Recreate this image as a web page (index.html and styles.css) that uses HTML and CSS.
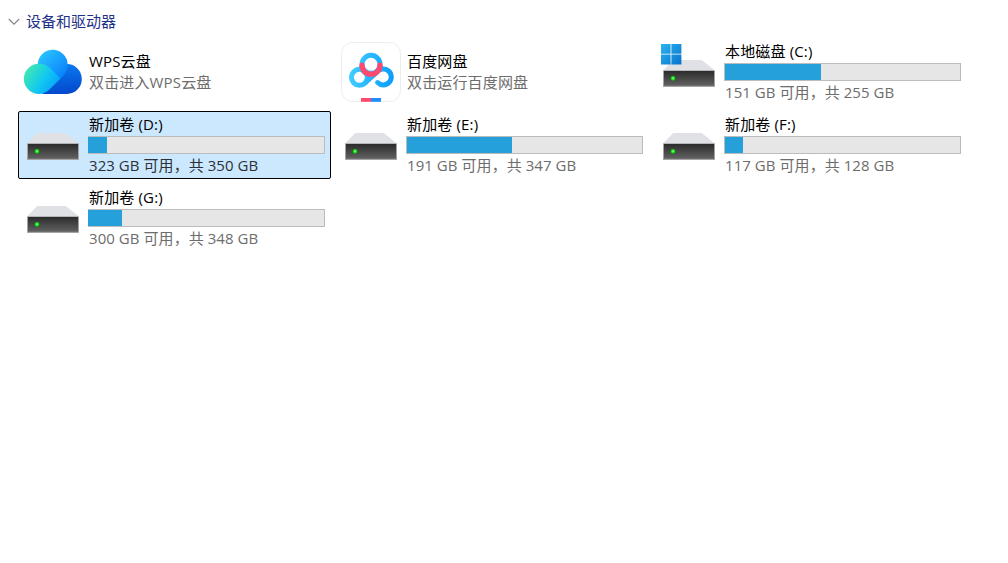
FILE: index.html
```html
<!DOCTYPE html>
<html lang="zh-CN">
<head>
  <meta charset="UTF-8" />
  <meta name="viewport" content="width=device-width, initial-scale=1" />
  <title>此电脑</title>
  <link rel="stylesheet" href="styles.css">
</head>
<body>
  <!-- Shared drive shape -->
  <svg class="defs" width="0" height="0">
    <defs>
      <linearGradient id="driveFront" x1="0" y1="0" x2="0" y2="1">
        <stop offset="0" stop-color="#2b2b2b" />
        <stop offset="1" stop-color="#626262" />
      </linearGradient>
      <radialGradient id="led">
        <stop offset="0" stop-color="#a8ffa4" />
        <stop offset="0.5" stop-color="#22e622" />
        <stop offset="1" stop-color="#0a8a12" />
      </radialGradient>
      <symbol id="drive" viewBox="1 1 69 66">
        <path d="M19.3 22H47.7L61 32.5H9Z" fill="#dfe1e5" />
        <rect x="9" y="32.2" width="52" height="16.7" rx="0.6" fill="#a3a3a3" />
        <rect x="10" y="33" width="50" height="14.8" fill="url(#driveFront)" />
        <circle cx="19" cy="40.3" r="2.6" fill="url(#led)" />
      </symbol>
    </defs>
  </svg>

  <div class="group-header">
    <svg class="chevron" width="12" height="8" viewBox="0 0 12 8"><path d="M0.8 1L6 6.2L11.2 1" /></svg>
    <h2>设备和驱动器</h2>
  </div>

  <div class="drive-grid">
    <div class="tile app">
      <svg class="icon" viewBox="1 1 69 66">
        <defs>
          <linearGradient id="wpsTop" x1="0.1" y1="0.1" x2="0.85" y2="0.85">
            <stop offset="0" stop-color="#2bc4ff" />
            <stop offset="1" stop-color="#0b84fb" />
          </linearGradient>
          <linearGradient id="wpsRight" x1="0.4" y1="0" x2="0.5" y2="1">
            <stop offset="0" stop-color="#0a7bf0" />
            <stop offset="1" stop-color="#0448cc" />
          </linearGradient>
          <linearGradient id="wpsLeft" x1="0.05" y1="0.3" x2="0.9" y2="0.75">
            <stop offset="0" stop-color="#3ce6b4" />
            <stop offset="0.55" stop-color="#12c8f0" />
            <stop offset="1" stop-color="#06a4fb" />
          </linearGradient>
        </defs>
        <path d="M49 26A14.8 15 0 0 1 49 56H24L38 38Z" fill="url(#wpsRight)" />
        <path d="M19.7 27.2A15 15 0 1 1 49.3 30.2Q47.5 36.5 42.3 40.4L31 41Z" fill="url(#wpsTop)" />
        <path d="M21 25.7Q27.5 25.7 32 30L42.5 40.5L32 51Q27 56 21 56A15.1 15.1 0 0 1 21 25.7Z" fill="url(#wpsLeft)" />
      </svg>
      <div class="info">
        <div class="name">WPS云盘</div>
        <div class="detail">双击进入WPS云盘</div>
      </div>
    </div>

    <div class="tile app">
      <svg class="icon" viewBox="1 1 69 66">
        <defs>
          <linearGradient id="panBlue" gradientUnits="userSpaceOnUse" x1="13" y1="36" x2="58" y2="42">
            <stop offset="0" stop-color="#42ceff" />
            <stop offset="1" stop-color="#0a9cfd" />
          </linearGradient>
        </defs>
        <rect x="5.5" y="4.5" width="59" height="59" rx="11" fill="#fff" stroke="#ededed" />
        <g fill="none" stroke="url(#panBlue)" stroke-width="5" stroke-linecap="round">
          <circle cx="35" cy="26.3" r="9" />
          <circle cx="23.4" cy="39.3" r="8" />
          <path d="M29 45L40.8 34.2A8 8 0 1 1 41.6 44.6" />
        </g>
        <path d="M22 29L25 28L33 36L30 39L23 32ZM48 29L45 28L37 36L39 37L47 32Z" fill="url(#panBlue)" />
        <path d="M26 27.2A9 9 0 0 0 44 27.2" fill="none" stroke="#ff4a6e" stroke-width="5.2" stroke-linecap="round" />
        <rect x="25" y="60" width="10" height="3.8" fill="#ff4a6e" />
        <rect x="35" y="60" width="10" height="3.8" fill="#1e8cff" />
      </svg>
      <div class="info">
        <div class="name">百度网盘</div>
        <div class="detail">双击运行百度网盘</div>
      </div>
    </div>

    <div class="tile">
      <svg class="icon" viewBox="1 1 69 66">
        <defs>
          <linearGradient id="winBlue" gradientUnits="userSpaceOnUse" x1="7" y1="6" x2="27" y2="26">
            <stop offset="0" stop-color="#2bb4ee" />
            <stop offset="1" stop-color="#0874cf" />
          </linearGradient>
        </defs>
        <use href="#drive" x="1" y="1" width="69" height="66" />
        <path d="M7 6H16.6V15.7H7ZM17.4 6H27.4V15.7H17.4ZM7 16.5H16.6V26.4H7ZM17.4 16.5H27.4V26.4H17.4Z" fill="url(#winBlue)" />
      </svg>
      <div class="info">
        <div class="name">本地磁盘 (C:)</div>
        <div class="bar"><div class="fill" style="width: 40.9%"></div></div>
        <div class="detail">151 GB 可用，共 255 GB</div>
      </div>
    </div>

    <div class="tile selected">
      <svg class="icon"><use href="#drive" /></svg>
      <div class="info">
        <div class="name">新加卷 (D:)</div>
        <div class="bar flush"><div class="fill" style="width: 8.1%"></div></div>
        <div class="detail">323 GB 可用，共 350 GB</div>
      </div>
    </div>

    <div class="tile">
      <svg class="icon"><use href="#drive" /></svg>
      <div class="info">
        <div class="name">新加卷 (E:)</div>
        <div class="bar"><div class="fill" style="width: 44.7%"></div></div>
        <div class="detail">191 GB 可用，共 347 GB</div>
      </div>
    </div>

    <div class="tile">
      <svg class="icon"><use href="#drive" /></svg>
      <div class="info">
        <div class="name">新加卷 (F:)</div>
        <div class="bar"><div class="fill" style="width: 7.7%"></div></div>
        <div class="detail">117 GB 可用，共 128 GB</div>
      </div>
    </div>

    <div class="tile">
      <svg class="icon"><use href="#drive" /></svg>
      <div class="info">
        <div class="name">新加卷 (G:)</div>
        <div class="bar flush"><div class="fill" style="width: 14.5%"></div></div>
        <div class="detail">300 GB 可用，共 348 GB</div>
      </div>
    </div>
  </div>
</body>
</html>
```

FILE: styles.css
```css
* {
  box-sizing: border-box;
}

body {
  margin: 0;
  padding: 10px 0 0;
  background: #fff;
  color: #000;
  font-family: "Open Sans", "Noto Sans CJK SC", sans-serif;
  font-size: 15px;
}

.defs {
  display: block;
}

/* Group header */
.group-header {
  display: flex;
  align-items: center;
  height: 22px;
  padding-left: 8px;
  gap: 6px;
}

.group-header h2 {
  margin: 0;
  font-size: 15px;
  font-weight: 400;
  line-height: 22px;
  color: #1e3287;
}

.chevron {
  margin-top: 2px;
}

.chevron path {
  fill: none;
  stroke: #858585;
  stroke-width: 1.1;
}

/* Drive tiles */
.drive-grid {
  display: grid;
  grid-template-columns: repeat(3, 313px);
  gap: 5px;
  padding: 6px 0 0 18px;
}

.tile {
  display: flex;
  height: 68px;
  border: 1px solid transparent;
  border-radius: 2px;
}

.tile.selected {
  background: #cce8ff;
  border-color: #000;
}

.icon {
  flex: none;
  width: 69px;
  height: 66px;
}

.info {
  width: 237px;
  padding-top: 3px;
  white-space: nowrap;
}

.app .info {
  padding-top: 13px;
}

.name,
.detail {
  height: 21px;
  padding-left: 1px;
  line-height: 19px;
  letter-spacing: 0.15px;
}

.detail {
  height: 22px;
  line-height: 22px;
  letter-spacing: 0.06px;
  color: #6d6d6d;
}

.app .detail {
  line-height: 18px;
  letter-spacing: 0.15px;
}

.selected .detail {
  color: #2b3136;
}

/* Usage bar */
.bar {
  height: 18px;
  border: 1px solid #bcbcbc;
  background: #e6e6e6;
}

.fill {
  height: 100%;
  background: #26a0da;
}

.flush .fill {
  margin-left: -1px;
}
```
